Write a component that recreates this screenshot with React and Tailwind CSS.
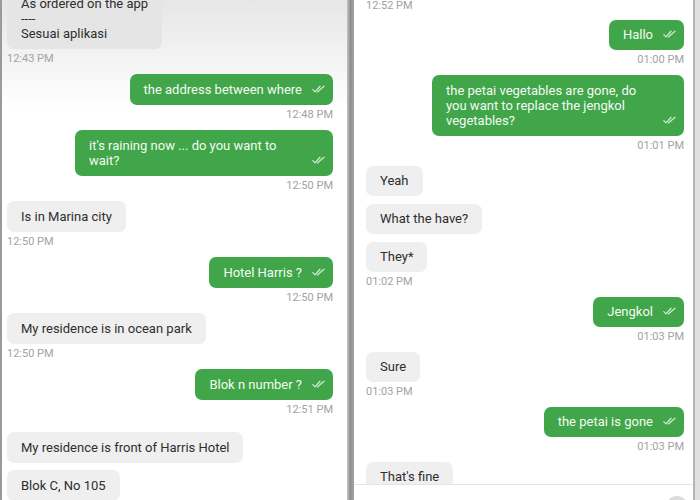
import React from 'react'

const left = [
  { side: 'in', lines: ['As ordered on the app', '----', 'Sesuai aplikasi'], ts: '12:43 PM', first: true },
  { side: 'out', text: 'the address between where', ts: '12:48 PM' },
  { side: 'out', text: "it's raining now ... do you want to wait?", ts: '12:50 PM', wide: 'w-[258px]' },
  { side: 'in', text: 'Is in Marina city', ts: '12:50 PM' },
  { side: 'out', text: 'Hotel Harris ?', ts: '12:50 PM' },
  { side: 'in', text: 'My residence is in ocean park', ts: '12:50 PM' },
  { side: 'out', text: 'Blok n number ?', ts: '12:51 PM' },
  { side: 'in', text: 'My residence is front of Harris Hotel', extra: 'mt-[14px]' },
  { side: 'in', text: 'Blok C, No 105' },
]

const right = [
  { side: 'out', text: 'Hallo', ts: '01:00 PM' },
  { side: 'out', text: 'the petai vegetables are gone, do you want to replace the jengkol vegetables?', ts: '01:01 PM', wide: 'w-[252px]', tall: true },
  { side: 'in', text: 'Yeah', extra: 'mt-[13px]' },
  { side: 'in', text: 'What the have?' },
  { side: 'in', text: 'They*', ts: '01:02 PM' },
  { side: 'out', text: 'Jengkol', ts: '01:03 PM' },
  { side: 'in', text: 'Sure', ts: '01:03 PM' },
  { side: 'out', text: 'the petai is gone', ts: '01:03 PM' },
  { side: 'in', text: "That's fine" },
]

function Ticks() {
  return (
    <svg width="13" height="8" viewBox="0 0 13 8" fill="none" className="shrink-0">
      <path d="M0.8 4.6 L3 6.9 L8 1.2" stroke="rgba(255,255,255,0.75)" strokeWidth="1.3" strokeLinecap="round" strokeLinejoin="round" />
      <path d="M5.4 6.9 L12 1.2" stroke="rgba(255,255,255,0.75)" strokeWidth="1.3" strokeLinecap="round" />
    </svg>
  )
}

function Msg({ m, compact }) {
  const lead = compact && !m.tall ? 'leading-[14px]' : 'leading-[15px]'
  const gap = compact ? 'mt-[8px]' : 'mt-[7px]'
  return (
    <div className={`flex flex-col ${m.side === 'out' ? 'items-end' : 'items-start'} ${m.first ? '-mt-[12px]' : m.extra || gap}`}>
      {m.side === 'in' ? (
        <div className={`rounded-[7px] px-[14px] py-2 text-[13px] ${lead} text-[#2e2e2e] ${m.first ? 'bg-[#e5e5e5]' : 'bg-[#efefef]'}`}>
          {m.lines ? m.lines.map((l, i) => <div key={i}>{l}</div>) : m.text}
        </div>
      ) : (
        <div className={`flex items-end justify-between rounded-[7px] bg-[#40a649] pl-[14px] pr-[8px] py-2 text-[13px] ${lead} text-[#f4faf4] ${m.wide || ''}`}>
          <span className={m.wide ? 'max-w-[200px]' : ''}>{m.text}</span>
          <span className="ml-[10px] mb-[4px]"><Ticks /></span>
        </div>
      )}
      {m.ts && (
        <div className={`mt-[3px] h-[14px] text-[11px] leading-[14px] text-[#a2a2a2] ${compact ? '' : 'mb-[1px]'}`}>{m.ts}</div>
      )}
    </div>
  )
}

export default function App() {
  return (
    <div className="flex h-[500px] w-[700px] overflow-hidden bg-white" style={{ fontFamily: 'Roboto, "Liberation Sans", sans-serif' }}>
      {/* left screenshot */}
      <div className="flex w-[347px] shrink-0 flex-col overflow-hidden border-l-2 border-[#9a9a9a] bg-linear-to-b from-[#e6e6e6] from-0% to-white to-[22%] pl-[5px] pr-[14px]">
        {left.map((m, i) => <Msg key={i} m={m} />)}
      </div>

      {/* divider between the two phones */}
      <div className="w-[7px] shrink-0 bg-linear-to-r from-[#c4c4c4] via-[#8e8e8e] to-[#a6a6a6]" />

      {/* right screenshot */}
      <div className="flex w-[339px] shrink-0 flex-col bg-white">
        <div className="flex flex-1 flex-col overflow-hidden pl-[12px] pr-[9px]">
          <div className="-mt-[1px] mb-[-1px] h-[14px] text-[11px] leading-[14px] text-[#a2a2a2]">12:52 PM</div>
          {right.map((m, i) => <Msg key={i} m={m} compact />)}
        </div>
        <div className="flex h-[16px] shrink-0 justify-end overflow-hidden border-t border-[#e4e4e4] pr-[5px]">
          <div className="mt-[11px] h-[22px] w-[22px] rounded-full bg-[#dcdcdc]" />
        </div>
      </div>

      {/* right frame */}
      <div className="flex-1 border-l-2 border-[#b4b4b4] bg-[#e0e0e0]" />
    </div>
  )
}
